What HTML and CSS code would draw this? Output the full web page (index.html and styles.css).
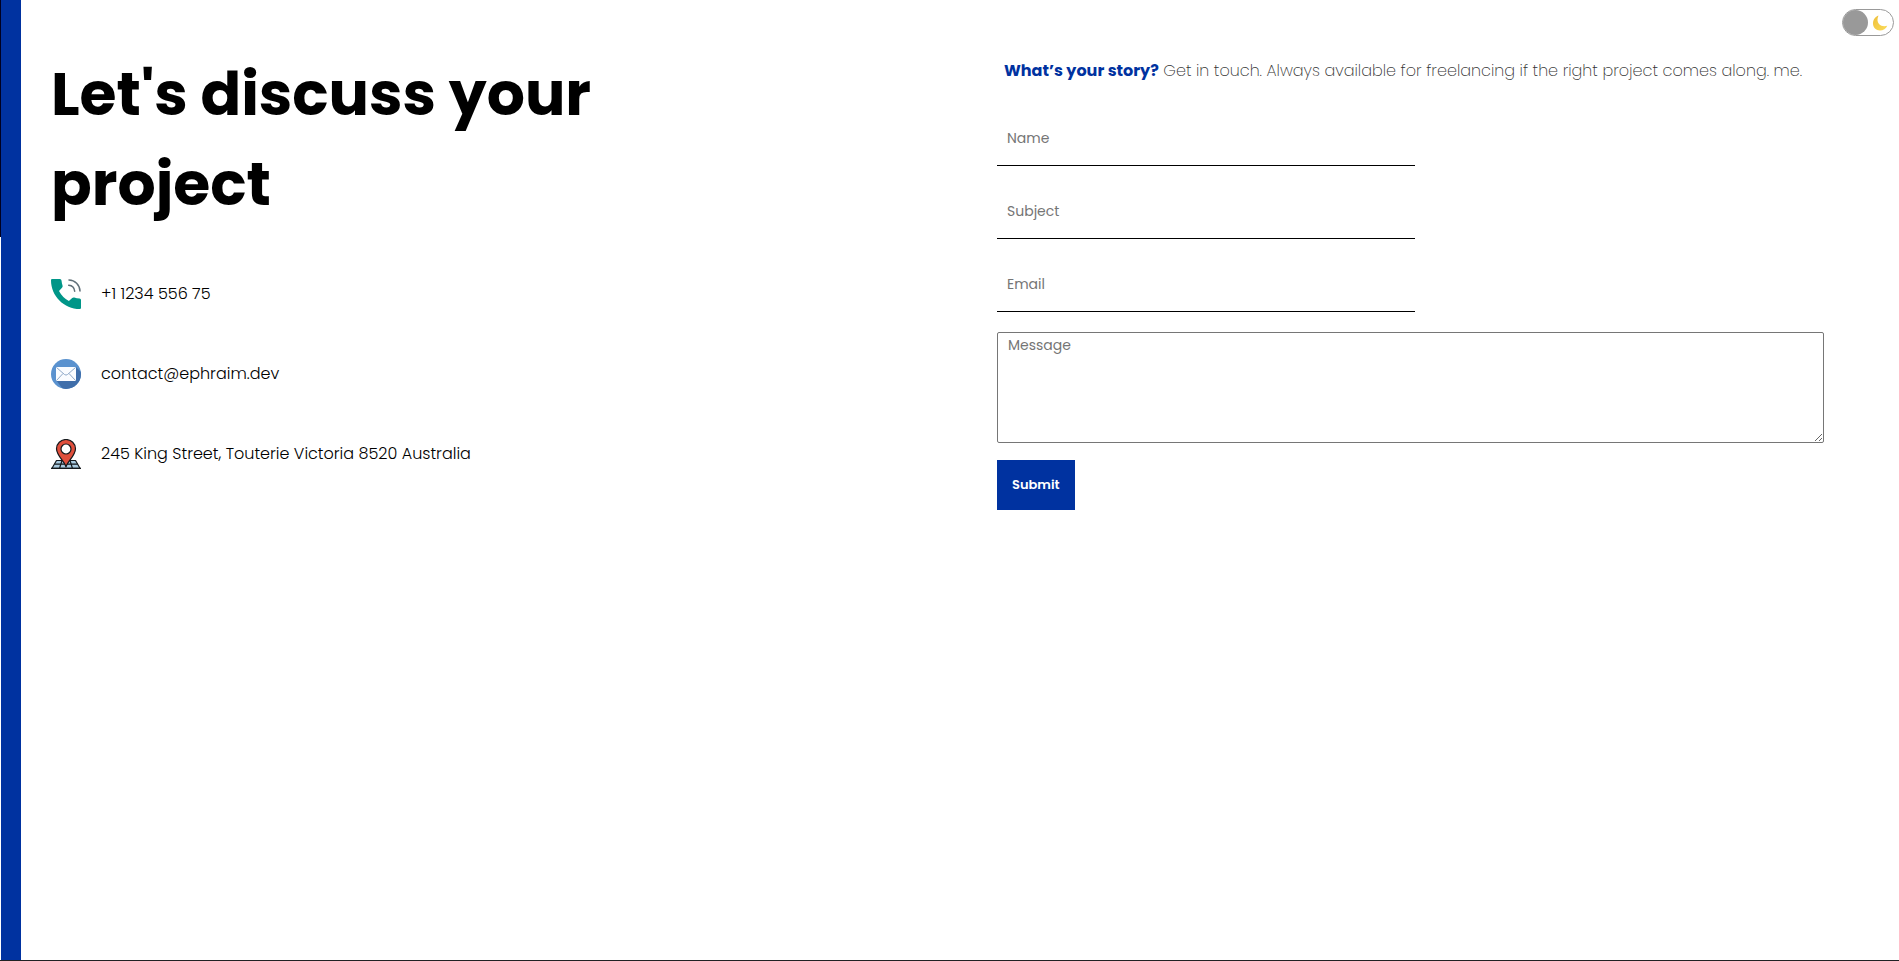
FILE: index.html
```html
<!DOCTYPE html>
<html lang="en">
<head>
<meta charset="utf-8">
<meta name="viewport" content="width=device-width, initial-scale=1">
<title>Contact</title>
<link rel="stylesheet" href="styles.css">
</head>
<body>
<div class="edge"></div>
<div class="contact-bg"></div>
<main class="contact">
  <section class="contact-left">
    <h1 class="contact-title">Let's discuss your project</h1>
    <address class="contact-info">
      <div class="info-item">
        <svg class="info-icon" viewBox="0 0 30 30" aria-hidden="true">
          <path fill="#009688" d="M1 0h8q1.300 0 1.500 1.500c.2 2 .6 3.600 1.100 5.200q.3 1.200-.6 2.100L8 12q3.700 7 9.900 9.900l3.300-2.900q.9-.8 2-.5c1.800.6 3.600.9 5.400 1q1.400.1 1.400 1.500V29q0 1-1.200 1C13 30 0 17 0 1.200Q0 0 1 0z"/>
          <path fill="none" stroke="#607079" stroke-width="1.500" stroke-linecap="round" d="M18 1c6 .2 10.700 5 11 11M17.700 6.200c3.500.3 5.700 2.500 6 6"/>
        </svg>
        <p class="info-text">+1 1234 556 75</p>
      </div>
      <div class="info-item">
        <svg class="info-icon" viewBox="0 0 30 30" aria-hidden="true">
          <defs><clipPath id="disc"><circle cx="15" cy="15" r="15"/></clipPath></defs>
          <circle cx="15" cy="15" r="15" fill="#5a92cf"/>
          <path clip-path="url(#disc)" fill="#3f6eaa" d="M25 8l8 8v17H14l-9-12z"/>
          <rect x="5" y="8" width="20" height="14" rx="1" fill="#fafcff"/>
          <path fill="none" stroke="#8fa9c9" stroke-width="1" d="M5.500 8.500l8 7q1.500 1.200 3 0l8-7M5.500 21.500l6.500-7M24.500 21.500l-6.500-7"/>
        </svg>
        <p class="info-text">contact@ephraim.dev</p>
      </div>
      <div class="info-item">
        <svg class="info-icon" viewBox="0 0 30 30" aria-hidden="true">
          <path fill="#a9cbe0" stroke="#15191d" stroke-width="1.200" stroke-linejoin="round" d="M5.500 21.500h19l4.500 7.800H1z"/>
          <path fill="none" stroke="#15191d" stroke-width="1.200" d="M3.500 25.200h23M11 21.500l-2.500 8M19 21.500l2.500 8M0 29.400h30"/>
          <path fill="#e04f3c" stroke="#15191d" stroke-width="1.200" stroke-linejoin="round" d="M15 28C14 23 5.500 16.500 5.500 9.700a9.500 9.200 0 0 1 19 0C24.500 16.500 16 23 15 28z"/>
          <circle cx="15" cy="10" r="5" fill="#fff" stroke="#15191d" stroke-width="1.200"/>
        </svg>
        <p class="info-text">245 King Street, Touterie Victoria 8520 Australia</p>
      </div>
    </address>
  </section>
  <section class="contact-right">
    <p class="contact-desc"><b class="desc-lead">What’s your story?</b> Get in touch. Always available for freelancing if the right project comes along. me.</p>
    <form class="contact-form">
      <input class="field" type="text" name="name" placeholder="Name" aria-label="Name">
      <input class="field" type="text" name="subject" placeholder="Subject" aria-label="Subject">
      <input class="field" type="email" name="email" placeholder="Email" aria-label="Email">
      <textarea class="message" name="message" rows="5" placeholder="Message" aria-label="Message"></textarea>
      <button class="submit" type="submit">Submit</button>
    </form>
  </section>
</main>
<button class="toggle" type="button" aria-label="Switch theme">
  <span class="toggle-knob"></span>
  <svg class="toggle-moon" viewBox="0 0 16 16" aria-hidden="true">
    <defs><linearGradient id="moon" x1="0" y1="0" x2="1" y2="1"><stop offset="0" stop-color="#eebf3a"/><stop offset="1" stop-color="#fbdc5a"/></linearGradient></defs>
    <path fill="url(#moon)" d="M6.500 .5C5 4 5.200 7 7 9c2 2.200 5 2.500 8.300 1.800C14 14 11.200 15.500 8 15.500 4 15.500 1 12.500 1 8.500c0-3.800 2.300-6.800 5.500-8z"/>
  </svg>
</button>
</body>
</html>
```
FILE: styles.css
```css
* {
  box-sizing: border-box;
  margin: 0;
}

body {
  display: flex;
  min-height: 100vh;
  border-bottom: 1px solid #202124;
  background: #fff;
  color: #000;
  font-family: Poppins, "Open Sans", sans-serif;
  font-size: 16px;
  line-height: 24px;
}

.edge {
  width: 1px;
  background: linear-gradient(#000020 237px, #fff 237px);
}

.contact-bg {
  width: 20px;
  background: #0032a0;
}

.contact {
  flex: 1;
  display: grid;
  grid-template-columns: 1fr 1fr;
  gap: 110px;
  align-items: start;
  padding: 49px 66px 49px 30px;
}

.contact-title {
  max-width: 75%;
  font-size: 60px;
  font-weight: 700;
  line-height: 90px;
}

.contact-info {
  display: grid;
  gap: 50px;
  margin-top: 50px;
  font-style: normal;
}

.info-item {
  display: flex;
  align-items: center;
  gap: 20px;
}

.info-icon {
  width: 30px;
  height: 30px;
}

.info-text {
  font-weight: 300;
}

.contact-desc {
  padding: 10px 7px 0;
  font-family: "Poppins ExtraLight", Poppins, "Open Sans", sans-serif;
  font-weight: 200;
  color: #333;
}

.desc-lead {
  font-family: Poppins, "Open Sans", sans-serif;
  font-weight: 700;
  color: #0032a0;
}

.contact-form {
  display: flex;
  flex-direction: column;
  align-items: flex-start;
  margin-top: 30px;
}

.field,
.message {
  font-family: inherit;
  font-size: 14px;
}

.field {
  width: 50%;
  height: 53px;
  margin-bottom: 20px;
  padding: 0 10px 2px;
  border: 0;
  border-bottom: 1px solid #000;
  background: transparent;
}

.field::placeholder,
.message::placeholder {
  color: #757575;
}

.message {
  width: calc(100% - 9px);
  height: 111px;
  margin-bottom: 17px;
  padding: 2px 10px;
  border: 1px solid #767676;
  border-radius: 2px;
  line-height: 21px;
}

.submit {
  padding: 15px;
  border: 0;
  background: #0032a0;
  color: #fff;
  font-family: inherit;
  font-size: 13px;
  font-weight: 600;
  line-height: 20px;
}

.toggle {
  position: fixed;
  top: 9px;
  right: 5px;
  display: flex;
  align-items: center;
  justify-content: space-between;
  width: 52px;
  height: 27px;
  padding: 0 5px 0 0;
  border: 1px solid #999;
  border-radius: 14px;
  background: #fff;
}

.toggle-knob {
  width: 25px;
  height: 25px;
  border-radius: 50%;
  background: #999;
}

.toggle-moon {
  width: 16px;
  height: 16px;
}
```
